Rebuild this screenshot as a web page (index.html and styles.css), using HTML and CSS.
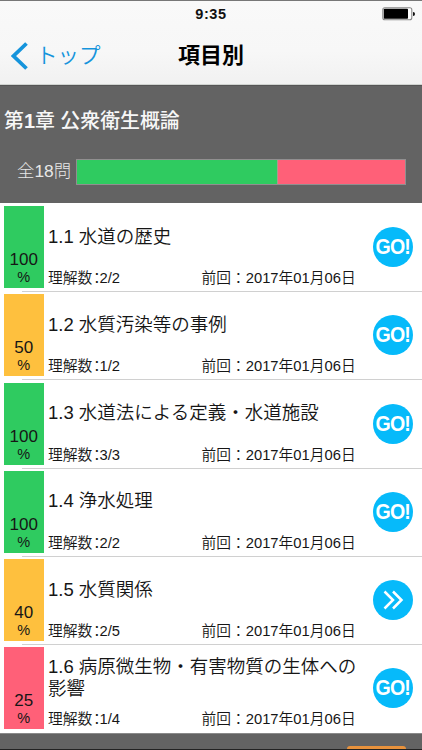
FILE: index.html
```
<!DOCTYPE html>
<html lang="ja">
<head>
<meta charset="utf-8">
<title>項目別</title>
<link rel="stylesheet" href="styles.css">
</head>
<body>
<div class="app">
  <header class="top">
    <div class="status">
      <span class="clock">9:35</span>
      <svg class="battery" width="34" height="14" viewBox="0 0 34 14"><rect x=".8" y=".8" width="29" height="12" rx="2" fill="#fff" stroke="#888" stroke-width="1.1"/><rect x="1.8" y="1.8" width="24.2" height="10" rx=".8" fill="#000"/><path d="M31 5q2 0 2 2t-2 2z" fill="#111"/></svg>
    </div>
    <nav class="nav">
      <a class="back"><svg width="18" height="28" viewBox="0 0 18 28"><path d="M15.5 1.5 2.5 14l13 12.5" fill="none" stroke="#1594dc" stroke-width="3.8"/></svg><span>トップ</span></a>
      <h1>項目別</h1>
    </nav>
  </header>
  <section class="chapter">
    <h2>第<b>1</b>章 公衆衛生概論</h2>
    <div class="summary"><span class="total">全18問</span><div class="bar"><div class="done"></div><div class="rest"></div></div></div>
  </section>
  <main class="list">
    <article class="row"><div class="rate green"><span>100</span><small>%</small></div><div class="info"><h3>1.1 水道の歴史</h3><p><span class="label">理解数<i>：</i></span><span class="count">2/2</span><time>前回：2017年01月06日</time></p></div><div class="go"><span>GO!</span></div></article>
    <article class="row"><div class="rate amber"><span>50</span><small>%</small></div><div class="info"><h3>1.2 水質汚染等の事例</h3><p><span class="label">理解数<i>：</i></span><span class="count">1/2</span><time>前回：2017年01月06日</time></p></div><div class="go"><span>GO!</span></div></article>
    <article class="row"><div class="rate green"><span>100</span><small>%</small></div><div class="info"><h3>1.3 水道法による定義・水道施設</h3><p><span class="label">理解数<i>：</i></span><span class="count">3/3</span><time>前回：2017年01月06日</time></p></div><div class="go"><span>GO!</span></div></article>
    <article class="row"><div class="rate green"><span>100</span><small>%</small></div><div class="info"><h3>1.4 浄水処理</h3><p><span class="label">理解数<i>：</i></span><span class="count">2/2</span><time>前回：2017年01月06日</time></p></div><div class="go"><span>GO!</span></div></article>
    <article class="row"><div class="rate amber"><span>40</span><small>%</small></div><div class="info"><h3>1.5 水質関係</h3><p><span class="label">理解数<i>：</i></span><span class="count">2/5</span><time>前回：2017年01月06日</time></p></div><div class="go"><svg width="40" height="40" viewBox="0 0 40 40"><path d="M11.5 11.5 20 20l-8.5 8.5M20 11.5l8.5 8.5-8.5 8.5" fill="none" stroke="#fff" stroke-width="2.5"/></svg></div></article>
    <article class="row"><div class="rate red"><span>25</span><small>%</small></div><div class="info"><h3>1.6 病原微生物・有害物質の生体への<br>影響</h3><p><span class="label">理解数<i>：</i></span><span class="count">1/4</span><time>前回：2017年01月06日</time></p></div><div class="go"><span>GO!</span></div></article>
  </main>
  <footer class="foot"><div class="tab"></div></footer>
</div>
</body>
</html>
```
FILE: styles.css
```
* { box-sizing: border-box; margin: 0; padding: 0; }
body {
  width: 422px;
  height: 750px;
  overflow: hidden;
  background: #fff;
  color: #161616;
  font-family: "Liberation Sans", "Noto Sans CJK JP", sans-serif;
}
.app { display: flex; flex-direction: column; height: 750px; }

.top {
  height: 85px;
  flex: none;
  background: linear-gradient(#f9f9f9, #f7f7f7 60%, #f1f1f1);
  border-top: 1px solid #777;
  border-bottom: 1px solid #d0d3d0;
}
.status { display: grid; grid-template-columns: 1fr auto 1fr; height: 26px; align-items: center; }
.clock { grid-column: 2; font-size: 14.5px; font-weight: 700; letter-spacing: .6px; color: #111; line-height: 26px; }
.battery { justify-self: end; margin-right: 6px; }
.nav { display: grid; grid-template-columns: 1fr auto 1fr; height: 57px; align-items: center; }
.back { display: flex; align-items: center; gap: 7px; padding-left: 11px; color: #1594dc; font-size: 21.5px; line-height: 30px; }
.back span { font-weight: 350; }
h1 { font-size: 22px; line-height: 30px; font-weight: 700; color: #000; }

.chapter { height: 118px; flex: none; background: #636363; border-top: 1px solid #555; color: #f7f7f7; padding-top: 19px; }
h2 { height: 32px; padding-left: 4px; font-size: 19.9px; line-height: 32px; font-weight: 500; white-space: nowrap; }
.summary { display: flex; align-items: center; height: 27px; margin-top: 21px; }
.total { width: 76px; padding-left: 17px; font-size: 17.4px; line-height: 26px; white-space: nowrap; font-weight: 300; color: #e8e8e8; margin-top: -2px; }
.bar { display: flex; width: 330px; height: 26px; border: 1px solid #918f90; }
.done { width: 201px; background: #2fcb60; border-right: 1px solid #a69b8d; }
.rest { flex: 1; background: #ff6078; }

.list { height: 530px; flex: none; padding-top: 3px; }
.row { display: flex; height: 88.3px; padding-left: 4px; background: linear-gradient(#d0d0d0, #d0d0d0) 22px 85px / 400px 1px no-repeat; }
.row:last-child { background: none; }
.rate { display: flex; flex-direction: column; width: 39.5px; height: 82px; padding-top: 45px; text-align: center; line-height: 18px; font-size: 17px; }
.rate small { font-size: 14.5px; line-height: 17px; }
.green { background: #2fcb60; }
.amber { background: #fec03e; }
.red { background: #ff6078; }
.info { width: 329.5px; padding-left: 4.5px; }
h3 { display: flex; align-items: center; height: 61px; font-size: 18.5px; line-height: 22px; font-weight: 350; white-space: nowrap; }
.info p { display: flex; height: 20px; margin-top: 1px; font-size: 14.75px; line-height: 20px; font-weight: 350; white-space: nowrap; }
.label { width: 51.5px; }
.label i { font-style: normal; font-feature-settings: "halt"; margin-left: 1px; }
.count { width: 102px; }
.go { display: flex; align-items: center; justify-content: center; width: 40px; height: 40px; margin-top: 21px; border-radius: 50%; background: #06bafa; color: #fff; font-size: 22.5px; font-weight: 700; }
.go span { letter-spacing: -1px; transform: scaleX(.87); }

.foot { flex: 1; background: #636363; border-top: 1px solid #8a8a8a; border-bottom: 1px solid #222; display: flex; align-items: flex-end; padding-left: 347px; overflow: hidden; }
.tab { width: 59px; height: 3px; border-radius: 5px 5px 0 0; background: #e8923c; }
```
